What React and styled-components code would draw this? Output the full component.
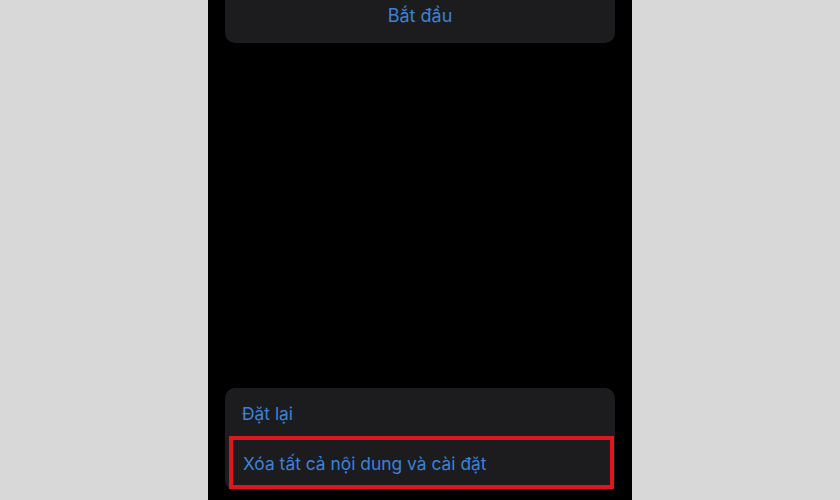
import React from 'react';
import styled, { createGlobalStyle } from 'styled-components';

const GlobalStyle = createGlobalStyle`
  html, body {
    margin: 0;
    padding: 0;
    background: #d8d8d8;
    font-family: Inter, "Noto Sans", sans-serif;
  }
`;

const Page = styled.div`
  display: flex;
  justify-content: center;
  width: 840px;
  height: 500px;
  background: #d8d8d8;
`;

const Phone = styled.div`
  display: flex;
  flex-direction: column;
  justify-content: space-between;
  width: 424px;
  height: 500px;
  background: #000;
  padding: 0 17px 10px;
  box-sizing: border-box;
`;

const TopCard = styled.div`
  background: #1c1c1e;
  border-radius: 0 0 10px 10px;
  padding: 4px 0 15px;
  text-align: center;
`;

const Card = styled.div`
  background: #1c1c1e;
  border-radius: 10px;
  display: flex;
  flex-direction: column;
  padding-bottom: 1px;
`;

const Label = styled.span`
  color: #3a82d8;
  font-size: ${p => (p.big ? '18px' : '17.4px')};
  line-height: 24px;
`;

const Row = styled.div`
  display: flex;
  align-items: center;
  height: 48px;
  padding: 3px 0 0 17px;
  box-sizing: border-box;
`;

const Highlighted = styled.div`
  display: flex;
  align-items: center;
  height: 53px;
  margin: 0 1px 0 4px;
  padding: 3px 0 0 10px;
  box-sizing: border-box;
  border: 4px solid #e0161e;
`;

export default function App() {
  return (
    <>
      <GlobalStyle />
      <Page>
        <Phone>
          <TopCard>
            <Label big>Bắt đầu</Label>
          </TopCard>
          <Card>
            <Row>
              <Label>Đặt lại</Label>
            </Row>
            <Highlighted>
              <Label>Xóa tất cả nội dung và cài đặt</Label>
            </Highlighted>
          </Card>
        </Phone>
      </Page>
    </>
  );
}
